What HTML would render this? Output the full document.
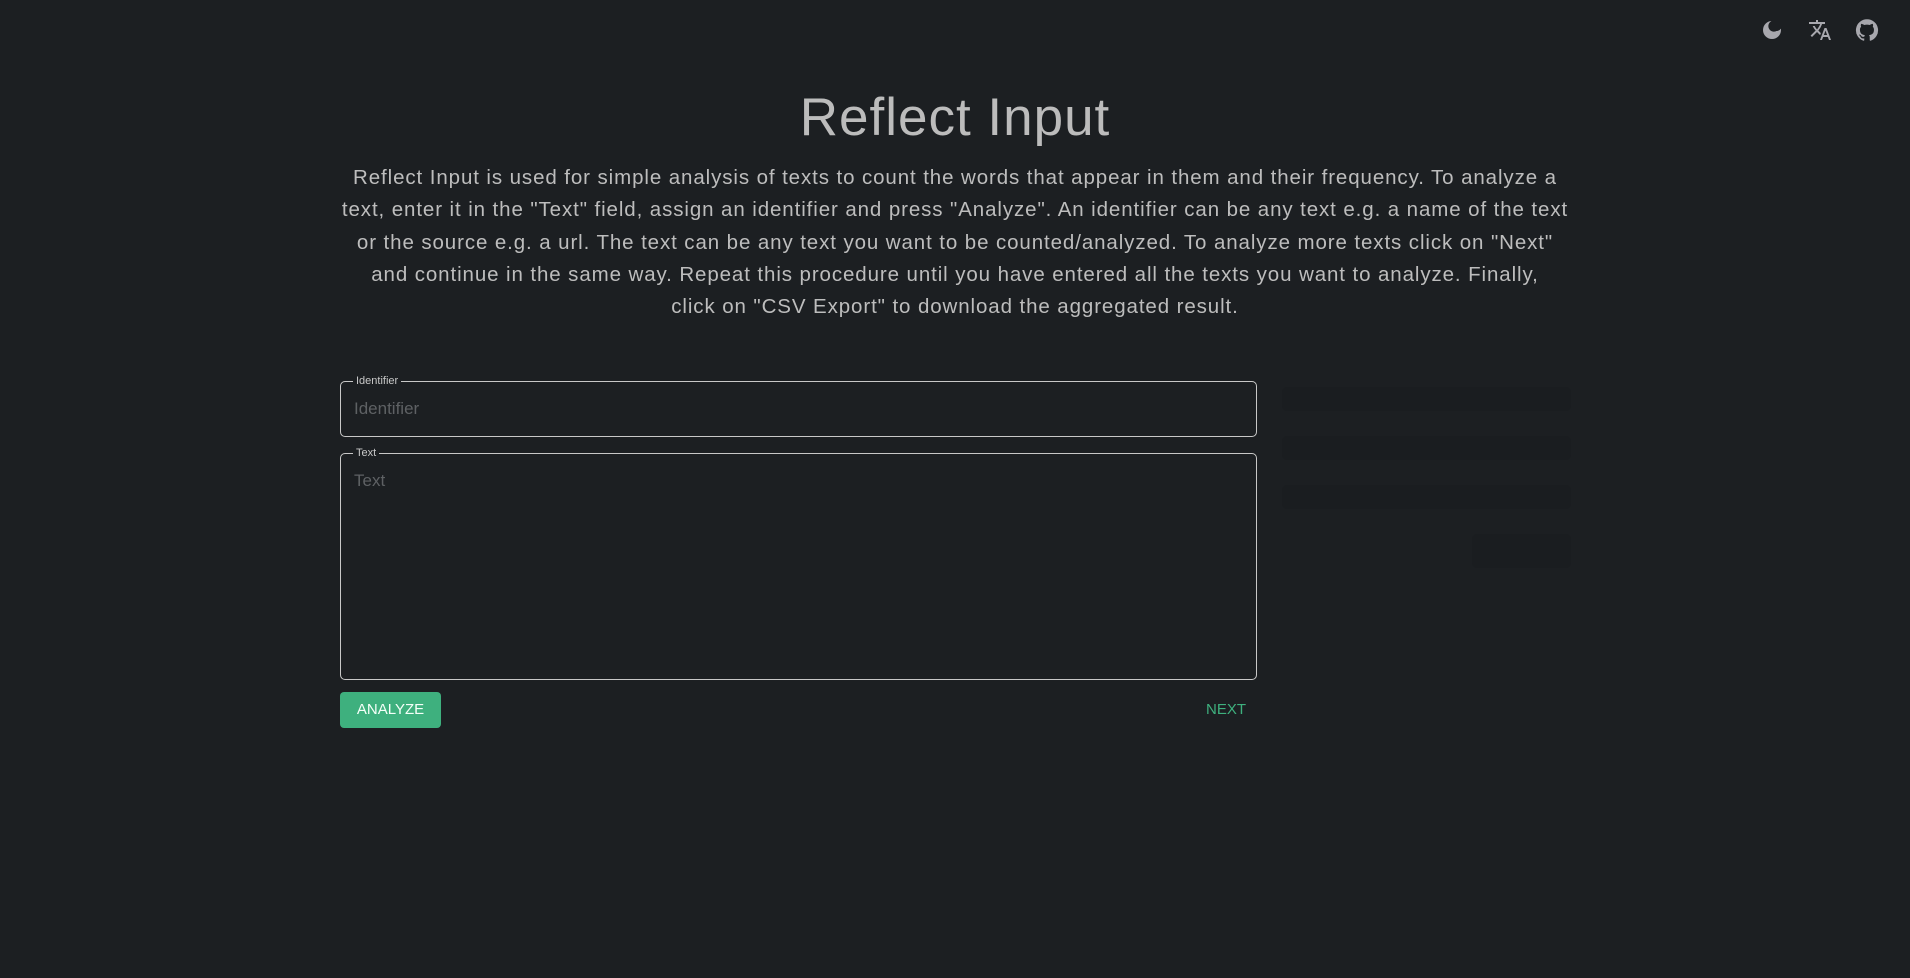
<!DOCTYPE html>
<html><head><meta charset="utf-8"><style>
html,body{margin:0;padding:0;background:#1c1f22;width:1910px;height:978px;overflow:hidden;font-family:"Liberation Sans",sans-serif;}
.icons{position:absolute;top:18px;}
h1{position:absolute;top:88px;left:0;width:1910px;text-align:center;margin:0;font-weight:300;font-size:53px;color:#bcbcbc;letter-spacing:1px;line-height:60px;}
p{position:absolute;top:162px;left:300px;width:1310px;text-align:center;margin:0;font-size:20.5px;line-height:32.3px;color:#bdbdbd;letter-spacing:0.9px;white-space:nowrap;}
.box{position:absolute;left:340px;width:915px;border:1px solid #c8c8c8;border-radius:5px;}
.lbl{position:absolute;top:-8px;left:12px;background:#1c1f22;padding:0 3px;font-size:11px;color:#c8c8c8;line-height:14px;}
.ph{position:absolute;left:13px;font-size:17px;color:#5e6164;}
.sk{position:absolute;background:#1a1d20;border-radius:5px;}
.btn{position:absolute;left:340px;top:692px;width:101px;height:36px;background:#3eb07e;border-radius:4px;color:#f4fff8;font-size:15px;line-height:36px;text-align:center;}
.next{position:absolute;left:1206px;top:692px;line-height:36px;font-size:15px;color:#3eb07e;}
</style></head><body>
<svg class="icons" style="left:1760px" width="24" height="24" viewBox="0 0 24 24"><path fill="#a8a8ae" d="M12 3a9 9 0 1 0 9 9c0-.46-.04-.92-.1-1.36A5.39 5.39 0 0 1 16.5 13 5.4 5.4 0 0 1 11.36 3.1C12 3 12 3 12 3z"/></svg>
<svg class="icons" style="left:1808px" width="24" height="24" viewBox="0 0 24 24"><path fill="#a8a8ae" d="m12.87 15.07-2.54-2.51.03-.03A17.52 17.52 0 0 0 14.07 6H17V4h-7V2H8v2H1v2h11.17C11.5 7.92 10.44 9.75 9 11.35 8.07 10.32 7.3 9.19 6.69 8h-2c.73 1.63 1.73 3.17 2.98 4.56l-5.09 5.02L4 19l5-5 3.11 3.11.76-2.04zM18.5 10h-2L12 22h2l1.12-3h4.75L21 22h2l-4.5-12zm-2.62 7 1.62-4.33L19.12 17h-3.24z"/></svg>
<svg class="icons" style="left:1855px" width="24" height="24" viewBox="0 0 24 24"><path fill="#a8a8ae" d="M12 1.27a11 11 0 0 0-3.48 21.46c.55.09.73-.28.73-.55v-1.84c-3.03.64-3.67-1.46-3.67-1.46-.55-1.29-1.28-1.65-1.28-1.65-.92-.65.1-.65.1-.65 1.1 0 1.73 1.1 1.73 1.1.92 1.65 2.57 1.2 3.21.92a2 2 0 0 1 .64-1.47c-2.47-.27-5.04-1.19-5.04-5.5 0-1.1.46-2.1 1.2-2.84a3.76 3.76 0 0 1 0-2.93s.91-.28 3.11 1.1c1.8-.49 3.7-.49 5.5 0 2.1-1.38 3.02-1.1 3.02-1.1a3.76 3.76 0 0 1 0 2.93c.83.74 1.2 1.74 1.2 2.94 0 4.21-2.57 5.13-5.04 5.4.45.37.82.92.82 2.02v3.03c0 .27.1.64.73.55A11 11 0 0 0 12 1.27"/></svg>
<h1>Reflect Input</h1>
<p>Reflect Input is used for simple analysis of texts to count the words that appear in them and their frequency. To analyze a<br>text, enter it in the "Text" field, assign an identifier and press "Analyze". An identifier can be any text e.g. a name of the text<br>or the source e.g. a url. The text can be any text you want to be counted/analyzed. To analyze more texts click on "Next"<br>and continue in the same way. Repeat this procedure until you have entered all the texts you want to analyze. Finally,<br>click on "CSV Export" to download the aggregated result.</p>
<div class="box" style="top:381px;height:54px"><span class="lbl">Identifier</span><span class="ph" style="top:17px">Identifier</span></div>
<div class="box" style="top:453px;height:225px"><span class="lbl">Text</span><span class="ph" style="top:17px">Text</span></div>
<div class="btn">ANALYZE</div>
<div class="next">NEXT</div>
<div class="sk" style="left:1282px;top:387px;width:289px;height:24px"></div>
<div class="sk" style="left:1282px;top:436px;width:289px;height:24px"></div>
<div class="sk" style="left:1282px;top:485px;width:289px;height:24px"></div>
<div class="sk" style="left:1472px;top:534px;width:99px;height:34px"></div>
</body></html>
